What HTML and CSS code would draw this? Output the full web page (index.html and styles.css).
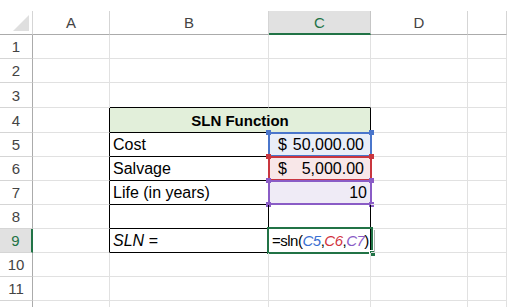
FILE: index.html
```html
<!DOCTYPE html>
<html>
<head>
<meta charset="utf-8">
<link rel="stylesheet" href="styles.css">
</head>
<body>
<div class="sheet">
  <div class="corner"><svg width="16" height="16" viewBox="0 0 16 16"><polygon points="0,16 16,16 16,0" fill="#dfdfdf"/></svg></div>
  <div class="ch">A</div>
  <div class="ch">B</div>
  <div class="ch ch-sel">C</div>
  <div class="ch">D</div>
  <div class="ch"></div>

  <div class="rh">1</div><div class="c"></div><div class="c"></div><div class="c"></div><div class="c"></div><div class="c"></div>
  <div class="rh">2</div><div class="c"></div><div class="c"></div><div class="c"></div><div class="c"></div><div class="c"></div>
  <div class="rh">3</div><div class="c"></div><div class="c bb"></div><div class="c bb"></div><div class="c"></div><div class="c"></div>

  <div class="rh">4</div><div class="c br"></div><div class="c tbl title">SLN Function</div><div class="c"></div><div class="c"></div>

  <div class="rh">5</div><div class="c br"></div><div class="c tbl">Cost</div>
  <div class="c tbl acct fill-blue"><span>$</span><span>50,000.00</span><span class="ref ref-blue"><i class="h tl"></i><i class="h tr"></i><i class="h bl"></i><i class="h brc"></i></span></div>
  <div class="c"></div><div class="c"></div>

  <div class="rh">6</div><div class="c br"></div><div class="c tbl">Salvage</div>
  <div class="c tbl acct fill-red"><span>$</span><span>5,000.00</span><span class="ref ref-red"><i class="h tl"></i><i class="h tr"></i><i class="h bl"></i><i class="h brc"></i></span></div>
  <div class="c"></div><div class="c"></div>

  <div class="rh">7</div><div class="c br"></div><div class="c tbl">Life (in years)</div>
  <div class="c tbl num fill-purple">10<span class="ref ref-purple"><i class="h tl"></i><i class="h tr"></i><i class="h bl"></i><i class="h brc"></i></span></div>
  <div class="c"></div><div class="c"></div>

  <div class="rh">8</div><div class="c br"></div><div class="c tbl"></div><div class="c tbl"></div><div class="c"></div><div class="c"></div>

  <div class="rh rh-sel">9</div><div class="c br"></div><div class="c tbl it">SLN =</div>
  <div class="c tbl formula">=sln(<span class="r-blue">C5</span>,<span class="r-red">C6</span>,<span class="r-purple">C7</span>)<span class="active"><i class="fillh"></i><i class="caret"></i></span></div>
  <div class="c"></div><div class="c"></div>

  <div class="rh">10</div><div class="c"></div><div class="c"></div><div class="c"></div><div class="c"></div><div class="c"></div>
  <div class="rh">11</div><div class="c"></div><div class="c"></div><div class="c"></div><div class="c"></div><div class="c"></div>
  <div class="rh">12</div><div class="c"></div><div class="c"></div><div class="c"></div><div class="c"></div><div class="c"></div>
</div>
</body>
</html>
```
FILE: styles.css
```css
html, body {
  margin: 0;
  padding: 0;
  background: #ffffff;
  overflow: hidden;
}
body {
  font-family: "Liberation Sans", Arial, sans-serif;
  color: #000;
}
.sheet {
  margin-top: 11px;
  display: grid;
  grid-template-columns: 33px 77px 159px 102px 97px 39px;
  grid-template-rows: 24px 24px 24px 25px 25px 24px 24px 24px 24px 24px 24px 24px 24px;
}
.sheet > div {
  box-sizing: border-box;
}
.corner {
  border-right: 1px solid #d5d5d5;
  border-bottom: 1px solid #ababab;
  display: flex;
  align-items: flex-end;
  justify-content: flex-end;
  padding: 0 3px 3px 0;
}
.corner svg { display: block; }
.ch {
  border-right: 1px solid #d5d5d5;
  border-bottom: 1px solid #ababab;
  display: flex;
  align-items: center;
  justify-content: center;
  font-size: 15px;
  color: #444;
}
.ch-sel {
  background: #e1e1e1;
  color: #217346;
  border-bottom: 2px solid #217346;
  border-right-color: #c6c6c6;
}
.rh {
  border-right: 1px solid #ababab;
  border-bottom: 1px solid #d5d5d5;
  display: flex;
  align-items: center;
  justify-content: center;
  font-size: 15px;
  color: #444;
}
.rh-sel {
  background: #e1e1e1;
  color: #217346;
  border-right: 2px solid #217346;
}
.c {
  border-right: 1px solid #e1e1e1;
  border-bottom: 1px solid #e1e1e1;
  font-size: 16px;
  line-height: 18px;
  display: flex;
  align-items: flex-end;
  padding: 0 3px 2px 3px;
  white-space: nowrap;
  position: relative;
}
.bb { border-bottom-color: #000; }
.br { border-right-color: #000; }
.tbl {
  border-right-color: #000;
  border-bottom-color: #000;
}
.title {
  grid-column: span 2;
  background: #e2efda;
  justify-content: center;
  font-weight: bold;
  font-size: 15px;
}
.acct {
  justify-content: space-between;
  padding: 0 6px 2px 9px;
}
.num { justify-content: flex-end; }
.it { font-style: italic; }
.fill-blue { background: #e9eef8; }
.fill-red { background: #f8e7e8; }
.fill-purple { background: #efebf6; }

.ref {
  position: absolute;
  top: -1px;
  left: -1px;
  right: -2px;
  bottom: -1px;
  border: 2px solid;
  pointer-events: none;
}
.ref-blue { border-color: #4a76cb; }
.ref-red { border-color: #c9363f; }
.ref-purple { border-color: #8a5cc6; }
.h {
  position: absolute;
  width: 5px;
  height: 5px;
}
.ref-blue .h { background: #4a76cb; }
.ref-red .h { background: #c9363f; }
.ref-purple .h { background: #8a5cc6; }
.tl { top: -4px; left: -4px; }
.tr { top: -4px; right: -4px; }
.bl { bottom: -4px; left: -4px; }
.brc { bottom: -4px; right: -4px; }

.formula {
  font-size: 15px;
  letter-spacing: -0.5px;
  padding-left: 3px;
  overflow: visible;
}
.r-blue { color: #3a6fd2; font-style: italic; }
.r-red { color: #d2323c; font-style: italic; }
.r-purple { color: #8a5cc6; font-style: italic; }
.active {
  position: absolute;
  top: -2px;
  left: -2px;
  right: -3px;
  bottom: -2px;
  border: 2px solid #217346;
}
.fillh {
  position: absolute;
  right: -4px;
  bottom: -4px;
  width: 5px;
  height: 5px;
  background: #217346;
  border-left: 1px solid #fff;
  border-top: 1px solid #fff;
}
.caret {
  position: absolute;
  top: 1px;
  bottom: 0;
  right: -4px;
  width: 1px;
  background: #b0b0b0;
}
```
